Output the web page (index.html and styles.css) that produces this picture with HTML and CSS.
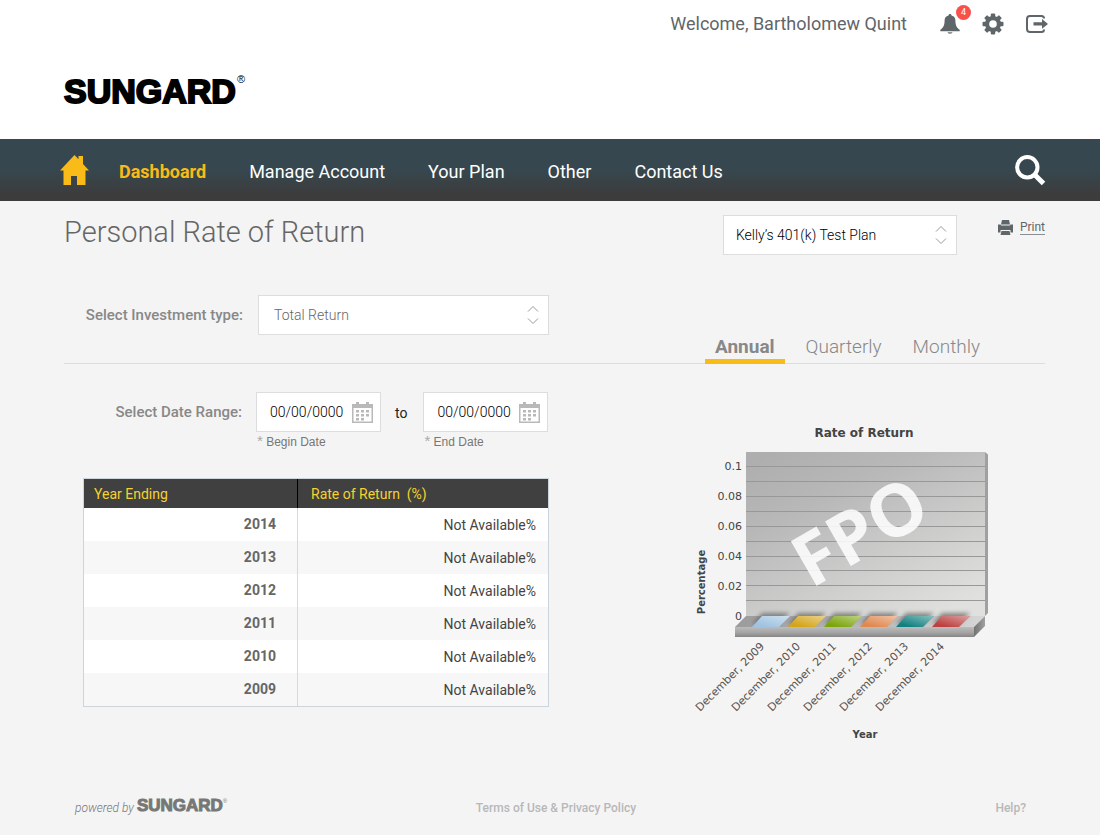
FILE: index.html
```html
<!DOCTYPE html>
<html lang="en">
<head>
<meta charset="utf-8">
<meta name="viewport" content="width=device-width, initial-scale=1">
<title>Personal Rate of Return</title>
<link rel="stylesheet" href="styles.css">
</head>
<body>
<header class="header">
  <div class="userbar">
    <span class="welcome">Welcome, Bartholomew Quint</span>
    <button class="icon-btn bell" type="button" aria-label="Notifications">
      <svg width="20" height="20" viewBox="0 0 20 20" fill="#5f666a"><path d="M10 0c-1 0-1.500.7-1.500 1.400C5.800 2 4.600 4 4.600 6.500c0 4.500-1 7.200-4.300 9.300v1.400h19.400v-1.400c-3.300-2.100-4.300-4.800-4.300-9.300 0-2.500-1.200-4.500-3.900-5.100C11.500.7 11 0 10 0z"/><path d="M7.500 18h5c-.3 1.200-1.200 2-2.500 2s-2.200-.8-2.500-2z" opacity=".7"/></svg>
      <span class="badge">4</span>
    </button>
    <button class="icon-btn gear" type="button" aria-label="Settings">
      <svg width="22" height="22" viewBox="-11 -11 22 22" fill="#5f666a"><rect x="-2.200" y="-10.500" width="4.400" height="21" rx="1"/><rect x="-2.200" y="-10.500" width="4.400" height="21" rx="1" transform="rotate(45)"/><rect x="-2.200" y="-10.500" width="4.400" height="21" rx="1" transform="rotate(90)"/><rect x="-2.200" y="-10.500" width="4.400" height="21" rx="1" transform="rotate(135)"/><circle r="8"/><circle r="3.800" fill="#fff"/></svg>
    </button>
    <button class="icon-btn" type="button" aria-label="Log out">
      <svg width="22" height="18" viewBox="0 0 22 18"><path d="M18 3.500C18 2 17 1 15.500 1H4C2.300 1 1 2.300 1 4v10c0 1.700 1.300 3 3 3h11.500c1.500 0 2.500-1 2.500-2.500" fill="none" stroke="#5f666a" stroke-width="2"/><path d="M7.500 7.300H16V4l6 4.900-6 4.900v-3.300H7.500z" fill="#5f666a"/></svg>
    </button>
  </div>
  <a class="logo" href="#">SUNGARD<sup>®</sup></a>
</header>

<nav class="nav">
  <a class="home" href="#" aria-label="Home">
    <svg width="29" height="30" viewBox="0 0 29 30" fill="#f8bb17"><path d="M14.500 0 0 15.500h3.500V30H11v-9h6v9h8.500V15.500H29L23 9V1h-4.500v3.300z"/></svg>
  </a>
  <a class="nav-link active" href="#">Dashboard</a>
  <a class="nav-link" href="#">Manage Account</a>
  <a class="nav-link" href="#">Your Plan</a>
  <a class="nav-link" href="#">Other</a>
  <a class="nav-link" href="#">Contact Us</a>
  <button class="icon-btn search" type="button" aria-label="Search">
    <svg width="31" height="31" viewBox="0 0 31 31" fill="none" stroke="#fff"><circle cx="12.300" cy="12.300" r="10.200" stroke-width="4"/><path d="M19.500 19.500 28.500 28.500" stroke-width="5"/></svg>
  </button>
</nav>

<main class="main">
  <div class="title-row">
    <h1 class="title">Personal Rate of Return</h1>
    <div class="select plan">
      <select aria-label="Plan"><option>Kelly’s 401(k) Test Plan</option></select>
      <svg class="arrows" width="12" height="20" viewBox="0 0 12 20" fill="none" stroke="#999"><path d="M1 6.500 6 1.500 11 6.500M1 13.500 6 18.500 11 13.500"/></svg>
    </div>
    <a class="print" href="#">
      <svg width="15" height="15" viewBox="0 0 15 15" fill="#5f666a"><path d="M4 0h7l1 4.500H3z"/><path d="M0 4.500h2.500l.6 1h8.800l.6-1H15V12.500h-2.500V10h-10v2.500H0z"/><path d="M3.500 11h8l1 4h-10z"/></svg>
      <span>Print</span>
    </a>
  </div>

  <div class="type-row">
    <div class="field-row">
      <label class="label" for="type">Select Investment type:</label>
      <div class="select type">
        <select id="type"><option>Total Return</option></select>
        <svg class="arrows" width="12" height="20" viewBox="0 0 12 20" fill="none" stroke="#999"><path d="M1 6.500 6 1.500 11 6.500M1 13.500 6 18.500 11 13.500"/></svg>
      </div>
    </div>
    <div class="tabs" role="tablist">
      <button class="tab selected" type="button" role="tab" aria-selected="true">Annual</button>
      <button class="tab" type="button" role="tab" aria-selected="false">Quarterly</button>
      <button class="tab" type="button" role="tab" aria-selected="false">Monthly</button>
    </div>
  </div>

  <div class="content">
    <section class="left">
      <div class="field-row dates">
        <span class="label date-label">Select Date Range:</span>
        <div class="date">
          <div class="date-box">
            <input id="begin" type="text" value="00/00/0000">
            <button class="icon-btn" type="button" aria-label="Choose begin date"><svg width="21" height="21" viewBox="0 0 21 21" fill="#b9b9b9"><path d="M0 2h4V0h3v2h7V0h3v2h4v19H0zM1.500 6v13.500h18V6z" fill-rule="evenodd"/><path d="M4 8h3v2.500H4zM9 8h3v2.500H9zM14 8h3v2.500h-3zM4 12h3v2.500H4zM9 12h3v2.500H9zM14 12h3v2.500h-3zM4 16h3v2.500H4zM9 16h3v2.500H9z"/></svg></button>
          </div>
          <label class="hint" for="begin"><span class="star">*</span> Begin Date</label>
        </div>
        <span class="to">to</span>
        <div class="date">
          <div class="date-box">
            <input id="end" type="text" value="00/00/0000">
            <button class="icon-btn" type="button" aria-label="Choose end date"><svg width="21" height="21" viewBox="0 0 21 21" fill="#b9b9b9"><path d="M0 2h4V0h3v2h7V0h3v2h4v19H0zM1.500 6v13.500h18V6z" fill-rule="evenodd"/><path d="M4 8h3v2.500H4zM9 8h3v2.500H9zM14 8h3v2.500h-3zM4 12h3v2.500H4zM9 12h3v2.500H9zM14 12h3v2.500h-3zM4 16h3v2.500H4zM9 16h3v2.500H9z"/></svg></button>
          </div>
          <label class="hint" for="end"><span class="star">*</span> End Date</label>
        </div>
      </div>

      <table class="table">
        <thead><tr><th class="year-col">Year Ending</th><th>Rate of Return &nbsp;(%)</th></tr></thead>
        <tbody>
          <tr><td>2014</td><td>Not Available%</td></tr>
          <tr><td>2013</td><td>Not Available%</td></tr>
          <tr><td>2012</td><td>Not Available%</td></tr>
          <tr><td>2011</td><td>Not Available%</td></tr>
          <tr><td>2010</td><td>Not Available%</td></tr>
          <tr><td>2009</td><td>Not Available%</td></tr>
        </tbody>
      </table>
    </section>

    <svg class="chart" width="310" height="326" viewBox="0 0 310 326" role="img" aria-label="Rate of Return chart">
      <defs>
        <linearGradient id="wall" x1="0.100" y1="0" x2="0.800" y2="1"><stop offset="0" stop-color="#aeaeae"/><stop offset=".3" stop-color="#b8b8b8"/><stop offset="1" stop-color="#e0e0de"/></linearGradient>
        <linearGradient id="floor" x1="0" y1="0" x2="1" y2="0"><stop offset="0" stop-color="#9b9b9b"/><stop offset="1" stop-color="#d6d6d6"/></linearGradient>
        <linearGradient id="front" x1="0" y1="0" x2="0" y2="1"><stop offset="0" stop-color="#bcbcbc"/><stop offset=".6" stop-color="#a2a2a2"/><stop offset="1" stop-color="#858585"/></linearGradient>
        <linearGradient id="side" x1="0" y1="0" x2="1" y2="0"><stop offset="0" stop-color="#727272"/><stop offset="1" stop-color="#a0a0a0"/></linearGradient>
        <linearGradient id="shine" x1="0" y1="1" x2="1" y2="0"><stop offset=".2" stop-color="#fff" stop-opacity="0"/><stop offset="1" stop-color="#fff" stop-opacity=".5"/></linearGradient>
        <filter id="soft" x="-30%" y="-60%" width="160%" height="220%"><feGaussianBlur stdDeviation="2"/></filter>
        <path id="tile" d="M10 0H38L27 11H0z"/>
      </defs>
      <text class="chart-title" x="174" y="17">Rate of Return</text>
      <path d="M295 32l3 2.500V193l-3 3z" fill="#a0a0a0"/>
      <path d="M56 32H295V196H56z" fill="url(#wall)"/>
      <path d="M56 46.500H295M56 61.500H295M56 76.500H295M56 91.500H295M56 106.500H295M56 121.500H295M56 136.500H295M56 150.500H295M56 165.500H295M56 180.500H295" stroke="#989898"/>
      <path d="M56 196H295L284 207H45z" fill="url(#floor)"/>
      <g fill="#666" opacity=".75" filter="url(#soft)"><use href="#tile" x="62" y="193"/><use href="#tile" x="98" y="193"/><use href="#tile" x="134" y="193"/><use href="#tile" x="170" y="193"/><use href="#tile" x="206" y="193"/><use href="#tile" x="242" y="193"/></g>
      <path d="M45 207H284V217H45z" fill="url(#front)"/>
      <path d="M284 207 295 196V206L284 217z" fill="url(#side)"/>
      <use href="#tile" x="62" y="196" fill="#9fc3e0"/><use href="#tile" x="98" y="196" fill="#d4a51a"/><use href="#tile" x="134" y="196" fill="#7ca50c"/><use href="#tile" x="170" y="196" fill="#e08850"/><use href="#tile" x="206" y="196" fill="#128080"/><use href="#tile" x="242" y="196" fill="#bc4040"/>
      <g fill="url(#shine)"><use href="#tile" x="62" y="196"/><use href="#tile" x="98" y="196"/><use href="#tile" x="134" y="196"/><use href="#tile" x="170" y="196"/><use href="#tile" x="206" y="196"/><use href="#tile" x="242" y="196"/></g>
      <text class="fpo" transform="translate(121 169) rotate(-30)">FPO</text>
      <g class="y-labels">
        <text x="52" y="50">0.1</text><text x="52" y="80">0.08</text><text x="52" y="110">0.06</text><text x="52" y="140">0.04</text><text x="52" y="170">0.02</text><text x="52" y="200">0</text>
      </g>
      <text class="axis-title" transform="translate(15 162) rotate(-90)">Percentage</text>
      <g class="x-labels">
        <text transform="translate(75 227) rotate(-45)">December, 2009</text>
        <text transform="translate(111 227) rotate(-45)">December, 2010</text>
        <text transform="translate(147 227) rotate(-45)">December, 2011</text>
        <text transform="translate(183 227) rotate(-45)">December, 2012</text>
        <text transform="translate(219 227) rotate(-45)">December, 2013</text>
        <text transform="translate(255 227) rotate(-45)">December, 2014</text>
      </g>
      <text class="axis-title" x="175" y="318">Year</text>
    </svg>
  </div>
</main>

<footer class="footer">
  <div class="powered"><span>powered by</span> <span class="logo small">SUNGARD<sup>®</sup></span></div>
  <a href="#">Terms of Use &amp; Privacy Policy</a>
  <a class="help" href="#">Help?</a>
</footer>
</body>
</html>
```

FILE: styles.css
```css
* { box-sizing: border-box; }

body {
  margin: 0;
  min-height: 100vh;
  display: flex;
  flex-direction: column;
  background: #f4f4f4;
  color: #5f666a;
  font-family: Roboto, "Liberation Sans", sans-serif;
  font-size: 14px;
}

a { color: inherit; text-decoration: none; }
svg { display: block; }
button, input, select { font: inherit; color: inherit; }

.icon-btn {
  position: relative;
  padding: 0;
  border: 0;
  background: none;
  cursor: pointer;
}

/* Header */
.header {
  padding: 12px 52px 30px 64px;
  background: #fff;
}
.userbar {
  display: flex;
  justify-content: flex-end;
  align-items: center;
  gap: 22px;
  height: 23px;
}
.welcome { margin-right: 11px; font-size: 18px; line-height: 24px; }
.badge {
  position: absolute;
  left: 16px;
  top: -9px;
  width: 15px;
  height: 15px;
  border-radius: 50%;
  background: #f9514a;
  color: #fff;
  font-size: 9px;
  line-height: 15px;
  text-align: center;
}
.logo {
  display: inline-flex;
  align-items: flex-start;
  gap: 1px;
  margin-top: 38px;
  color: #000;
  font: bold 34px/36px "Liberation Sans", Arial, sans-serif;
  -webkit-text-stroke: 2px currentColor;
}
.logo sup {
  font-size: 11px;
  font-weight: normal;
  line-height: 12px;
  -webkit-text-stroke: 0;
}

/* Navigation */
.nav {
  display: flex;
  align-items: center;
  gap: 43px;
  padding: 0 54px 0 60px;
  min-height: 62px;
  background: linear-gradient(#37474f 0%, #37474f 50%, #3c3c3c 88%);
  color: #fff;
  font-size: 18px;
  line-height: 24px;
}
.home { margin-right: -13px; }
.nav-link { padding-top: 4px; }
.active { color: #f8bb17; font-weight: bold; }
.search { margin-left: auto; }

/* Page heading */
.main { flex: 1; padding: 14px 55px 0 64px; }
.title-row { display: flex; align-items: flex-start; }
.title {
  flex: 1;
  margin: 0;
  color: #666;
  font-size: 29px;
  font-weight: 300;
  line-height: 35px;
}
.select {
  position: relative;
  height: 40px;
  border: 1px solid #ddd;
  background: #fff;
}
.select select {
  width: 100%;
  height: 100%;
  border: 0;
  padding: 0 40px 0 12px;
  appearance: none;
  background: transparent;
}
.arrows { position: absolute; right: 9px; top: 9px; pointer-events: none; }
.plan { width: 234px; color: #000; font-weight: 300; }
.print {
  display: flex;
  align-items: center;
  gap: 7px;
  margin: 5px 0 0 41px;
  font-size: 12px;
}
.print span { border-bottom: 1px solid #8a8f92; line-height: 14px; }

/* Filters */
.type-row {
  display: flex;
  justify-content: space-between;
  margin-top: 40px;
  border-bottom: 1px solid #ddd;
}
.field-row { display: flex; align-items: center; gap: 15px; }
.type-row .field-row { padding-bottom: 28px; }
.label {
  width: 179px;
  color: #888;
  font-size: 15px;
  font-weight: 500;
  text-align: right;
}
.type { width: 291px; color: #666; font-weight: 300; }
.type select { padding-left: 15px; }

.tabs {
  display: flex;
  align-self: flex-end;
  gap: 11px;
  margin: 0 55px -1px 0;
}
.tab {
  padding: 0 10px 1px;
  border: 0;
  border-bottom: 5px solid transparent;
  background: none;
  color: #888;
  font-size: 19px;
  font-weight: 300;
  line-height: 22px;
}
.selected { border-color: #f8bb17; font-weight: bold; }

.content { display: flex; justify-content: space-between; }
.left { flex: 0 1 485px; padding-top: 28px; }
.dates { align-items: flex-start; gap: 14px; }
.date-label { width: 178px; line-height: 40px; }
.date-box {
  display: flex;
  align-items: center;
  justify-content: space-between;
  width: 125px;
  height: 40px;
  padding: 0 7px 0 13px;
  border: 1px solid #ddd;
  background: #fff;
}
.date-box input {
  width: 78px;
  padding: 0;
  border: 0;
  background: none;
  color: #000;
  font-weight: 300;
}
.to { padding-right: 2px; line-height: 42px; color: #222; }
.hint {
  display: block;
  padding-left: 1px;
  color: #777;
  font: 12px/20px "Liberation Sans", Arial, sans-serif;
}
.star { color: #aaa; font-size: 15px; line-height: 12px; }

/* Results table */
.table {
  width: 466px;
  max-width: 100%;
  margin: 26px 0 0 19px;
  border: 1px solid #cbd5da;
  border-spacing: 0;
  background: #fff;
  line-height: 17px;
}
.table th {
  padding: 7px 10px 5px;
  background: #404040;
  color: #f4d22f;
  font-weight: normal;
  text-align: left;
}
.table .year-col { width: 214px; border-right: 1px solid #000; }
.table th:last-child { padding-left: 13px; }
.table td { padding: 9px 12px 7px; color: #444; text-align: right; }
.table td:first-child {
  padding: 8px 21px 8px 12px;
  border-right: 1px solid #d5dadd;
  color: #666;
  font-weight: bold;
}
.table tbody tr:nth-child(even) { background: #f7f7f7; }

/* Chart */
.chart {
  margin: 56px 45px 0 0;
  font-family: "DejaVu Sans", Verdana, sans-serif;
  fill: #444;
}
.chart-title { font-size: 12px; font-weight: bold; text-anchor: middle; }
.axis-title { font-size: 10px; font-weight: bold; text-anchor: middle; }
.y-labels { font-size: 11px; text-anchor: end; }
.x-labels { font-size: 11px; text-anchor: end; fill: #555; }
.fpo { fill: #fff; fill-opacity: .85; font: 700 72px "Open Sans", sans-serif; }

/* Footer */
.footer {
  display: grid;
  grid-template-columns: 401fr auto 390fr;
  align-items: center;
  padding: 48px 74px 17px 75px;
  color: #b8b8b8;
  font-size: 12px;
  font-weight: 500;
  line-height: 20px;
}
.powered {
  display: flex;
  gap: 3px;
  color: #777;
  font-style: italic;
  font-weight: 300;
}
.small {
  gap: 0;
  margin: 0;
  color: #777;
  font-size: 17px;
  line-height: 16px;
  -webkit-text-stroke-width: 1px;
}
.small sup { font-size: 6px; line-height: 6px; }
.help { text-align: right; }
```
